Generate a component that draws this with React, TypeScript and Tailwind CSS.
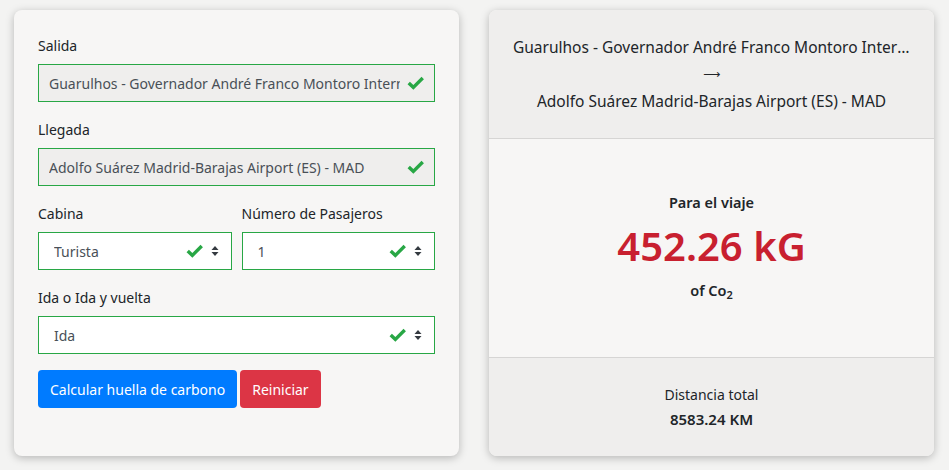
import React from 'react';

const Check = () => (
  <svg viewBox="0 0 16 16" className="w-[19px] h-[19px] text-[#28a745]" fill="currentColor">
    <path d="M1.3 8.6 L3.3 6.6 L6.2 9.3 L13.1 2.4 L15.1 4.4 L6.2 13.2 Z" />
  </svg>
);

const Caret = () => (
  <svg viewBox="0 0 8 12" className="w-[8px] h-[12px] text-[#343a40]" fill="currentColor">
    <path d="M4 1 L7.5 5 L0.5 5 Z" />
    <path d="M4 11 L7.5 7 L0.5 7 Z" />
  </svg>
);

const Field: React.FC<{ label: string; value: string; select?: boolean }> = ({ label, value, select }) => (
  <div className="flex flex-col">
    <label className="text-[14px] text-[#212529] mb-[8px] leading-[20px]">{label}</label>
    <div
      className={`h-[38px] border border-[#28a745] flex items-center ${select ? 'bg-white pl-[15px] pr-[12px]' : 'bg-[#efeeed] pl-[10px] pr-[9px]'}`}
    >
      <span className="flex-1 text-[14px] text-[#495057] whitespace-nowrap overflow-hidden">{value}</span>
      <span className="flex items-center gap-[7px] pl-[6px]">
        <Check />
        {select && <Caret />}
      </span>
    </div>
  </div>
);

export default function App() {
  return (
    <div
      className="w-[949px] h-[470px] bg-[#f3f3f2] flex gap-[30px] pl-[14px] pt-[10px]"
      style={{ fontFamily: '"Noto Sans", "Open Sans", sans-serif' }}
    >
      <div className="w-[445px] h-[446px] bg-[#f7f6f5] rounded-[8px] shadow-[0_2px_8px_rgba(0,0,0,0.25)] px-[24px] pt-[26px] flex flex-col">
        <div className="flex flex-col gap-[18px]">
          <Field label="Salida" value="Guarulhos - Governador André Franco Montoro International Airport (BR) - GRU" />
          <Field label="Llegada" value="Adolfo Suárez Madrid-Barajas Airport (ES) - MAD" />
          <div className="grid grid-cols-2 gap-[10px]">
            <Field label="Cabina" value="Turista" select />
            <Field label="Número de Pasajeros" value="1" select />
          </div>
          <Field label="Ida o Ida y vuelta" value="Ida" select />
        </div>
        <div className="flex gap-[3px] mt-[16px]">
          <button className="h-[38px] px-[12px] bg-[#007bff] text-white text-[14px] rounded-[4px]">
            Calcular huella de carbono
          </button>
          <button className="h-[38px] px-[12px] bg-[#dc3545] text-white text-[14px] rounded-[4px]">
            Reiniciar
          </button>
        </div>
      </div>

      <div className="w-[445px] h-[446px] bg-[#f7f6f5] rounded-[8px] shadow-[0_2px_8px_rgba(0,0,0,0.25)] overflow-hidden flex flex-col">
        <div className="h-[129px] bg-[#efeeed] border-b border-[#d6d5d4] flex flex-col items-center justify-center text-[#212529] text-[15.5px] leading-[27px] px-[24px]">
          <div className="w-full text-center whitespace-nowrap overflow-hidden text-ellipsis">
            Guarulhos - Governador André Franco Montoro International Airport (BR) - GRU
          </div>
          <div className="text-[12px] font-['DejaVu_Sans',sans-serif]">⟶</div>
          <div>Adolfo Suárez Madrid-Barajas Airport (ES) - MAD</div>
        </div>
        <div className="flex-1 flex flex-col items-center justify-center text-[#212529] pb-[4px]">
          <div className="text-[14.5px] font-semibold leading-[20px]">Para el viaje</div>
          <div className="text-[40px] font-semibold text-[#c8202f] leading-[68px]">452.26 kG</div>
          <div className="text-[14.5px] font-semibold leading-[20px]">
            of Co<sub className="text-[11px]">2</sub>
          </div>
        </div>
        <div className="h-[99px] bg-[#efeeed] border-t border-[#d6d5d4] flex flex-col items-center justify-center text-[#212529] text-[14px] leading-[24px]">
          <div>Distancia total</div>
          <div className="font-semibold text-[15px]">8583.24 KM</div>
        </div>
      </div>
    </div>
  );
}
